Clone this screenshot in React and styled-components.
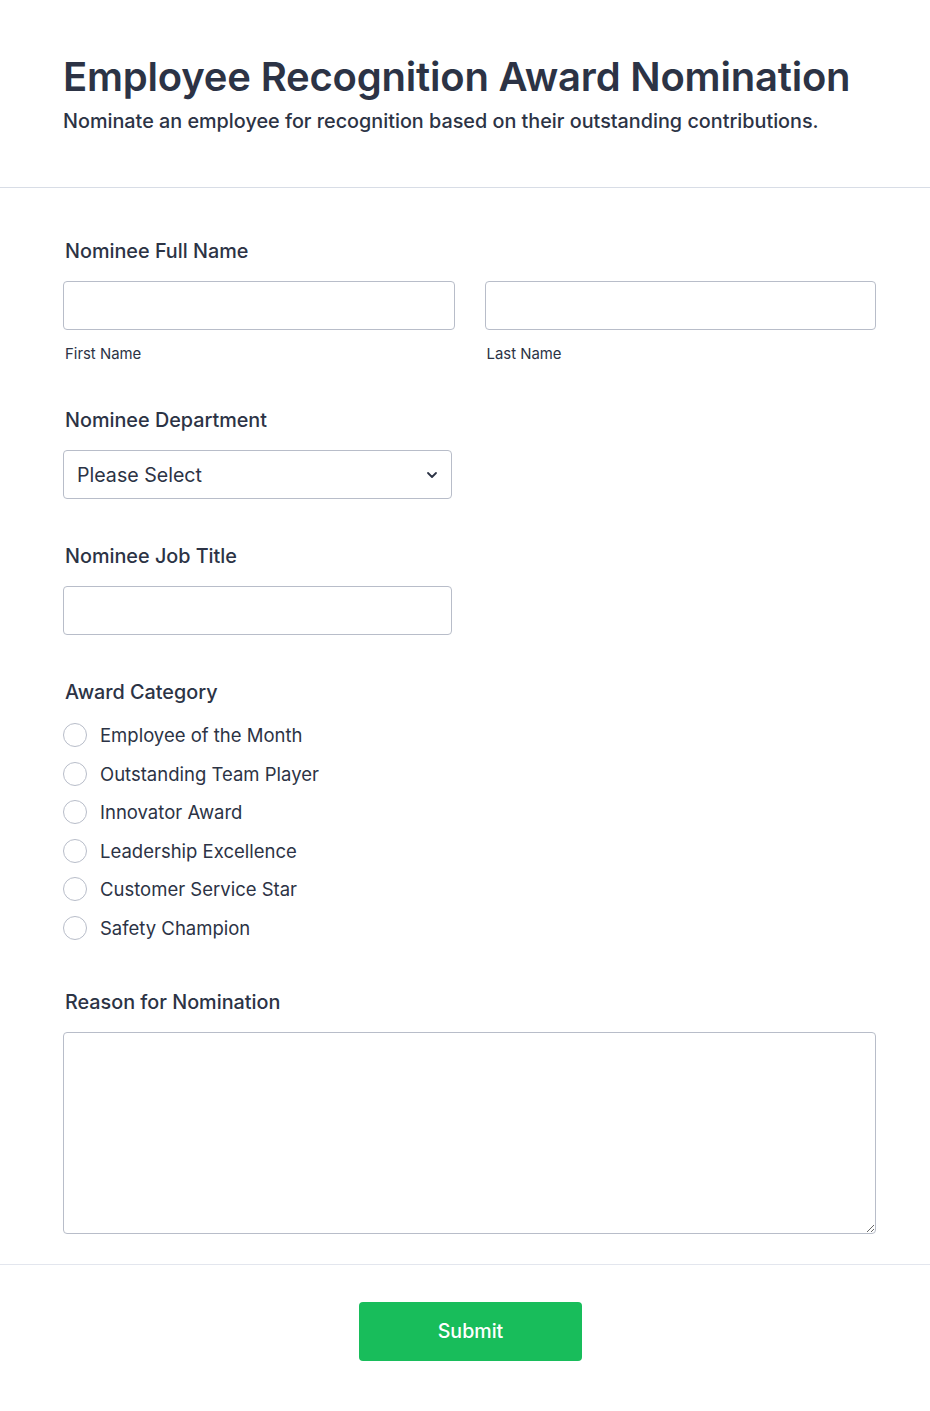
import React from "react";
import styled, { createGlobalStyle } from "styled-components";

const Global = createGlobalStyle`
  * { box-sizing: border-box; }
  body {
    margin: 0;
    background: #ffffff;
    font-family: Inter, "Noto Sans", sans-serif;
    color: #2c3345;
  }
`;

const Page = styled.div`
  width: 930px;
  background: #fff;
`;

const Header = styled.header`
  padding: 52px 63px 54px;
  border-bottom: 1px solid #d8dde6;
`;

const Title = styled.h1`
  margin: 0;
  font-size: 40px;
  font-weight: 600;
  line-height: 50px;
  letter-spacing: -0.2px;
  color: #2c3345;
`;

const Subtitle = styled.p`
  margin: 7px 0 0;
  font-size: 19.8px;
  font-weight: 500;
  line-height: 24px;
  color: #2c3345;
`;

const Body = styled.main`
  padding: 50px 54px 30px 63px;
  display: flex;
  flex-direction: column;
  gap: 44px;
  border-bottom: 1px solid #e3e6ee;
`;

const Field = styled.section`
  display: flex;
  flex-direction: column;
`;

const Label = styled.label`
  font-size: 19.8px;
  font-weight: 500;
  line-height: 26px;
  color: #2c3345;
  padding-left: 2px;
  margin-bottom: 17px;
`;

const Row = styled.div`
  display: grid;
  grid-template-columns: 1fr 1fr;
  gap: 30px;
`;

const Column = styled.div`
  display: flex;
  flex-direction: column;
`;

const Input = styled.input`
  width: ${(p) => p.$width || "100%"};
  height: 49px;
  border: 1px solid #b8bdc9;
  border-radius: 4px;
  padding: 0 13px;
  font-family: inherit;
  font-size: 18px;
  color: #2c3345;
  background: #fff;
  outline: none;
`;

const SubLabel = styled.span`
  margin-top: 15px;
  padding-left: 2px;
  font-size: 14.9px;
  color: #2c3345;
  line-height: 18px;
`;

const SelectBox = styled.div`
  width: 389px;
  height: 49px;
  border: 1px solid #b8bdc9;
  border-radius: 4px;
  padding: 0 12px 0 13px;
  display: flex;
  align-items: center;
  justify-content: space-between;
  font-size: 19.6px;
  color: #2c3345;
`;

const RadioList = styled.div`
  display: flex;
  flex-direction: column;
  gap: 14.5px;
  margin: 1px 0 5px;
`;

const RadioItem = styled.label`
  display: flex;
  align-items: center;
  gap: 13px;
  font-size: 18.5px;
  line-height: 24px;
  color: #2c3345;
`;

const RadioCircle = styled.span`
  width: 24px;
  height: 24px;
  border-radius: 50%;
  border: 1px solid #b8bdc9;
  background: #fff;
  flex: none;
`;

const TextArea = styled.textarea`
  width: 100%;
  height: 202px;
  border: 1px solid #b8bdc9;
  border-radius: 4px;
  font-family: inherit;
  font-size: 18px;
  padding: 10px 13px;
  resize: vertical;
  outline: none;
  display: block;
`;

const Footer = styled.footer`
  display: flex;
  justify-content: center;
  padding: 37px 0 49px 11px;
`;

const SubmitButton = styled.button`
  width: 223px;
  height: 59px;
  border: none;
  border-radius: 4px;
  background: #18bd5b;
  color: #fff;
  font-family: inherit;
  font-size: 19.6px;
  font-weight: 500;
  cursor: pointer;
`;

const Chevron = () => (
  <svg width="14" height="14" viewBox="0 0 14 14" fill="none">
    <path d="M3 5l4 4 4-4" stroke="#2c3345" strokeWidth="1.8" strokeLinecap="round" strokeLinejoin="round" />
  </svg>
);

const categories = [
  "Employee of the Month",
  "Outstanding Team Player",
  "Innovator Award",
  "Leadership Excellence",
  "Customer Service Star",
  "Safety Champion",
];

export default function App() {
  return (
    <Page>
      <Global />
      <Header>
        <Title>Employee Recognition Award Nomination</Title>
        <Subtitle>Nominate an employee for recognition based on their outstanding contributions.</Subtitle>
      </Header>
      <Body>
        <Field>
          <Label>Nominee Full Name</Label>
          <Row>
            <Column>
              <Input />
              <SubLabel>First Name</SubLabel>
            </Column>
            <Column>
              <Input />
              <SubLabel>Last Name</SubLabel>
            </Column>
          </Row>
        </Field>
        <Field>
          <Label>Nominee Department</Label>
          <SelectBox>
            <span>Please Select</span>
            <Chevron />
          </SelectBox>
        </Field>
        <Field>
          <Label>Nominee Job Title</Label>
          <Input $width="389px" />
        </Field>
        <Field>
          <Label>Award Category</Label>
          <RadioList>
            {categories.map((c) => (
              <RadioItem key={c}>
                <RadioCircle />
                {c}
              </RadioItem>
            ))}
          </RadioList>
        </Field>
        <Field>
          <Label>Reason for Nomination</Label>
          <TextArea />
        </Field>
      </Body>
      <Footer>
        <SubmitButton>Submit</SubmitButton>
      </Footer>
    </Page>
  );
}
